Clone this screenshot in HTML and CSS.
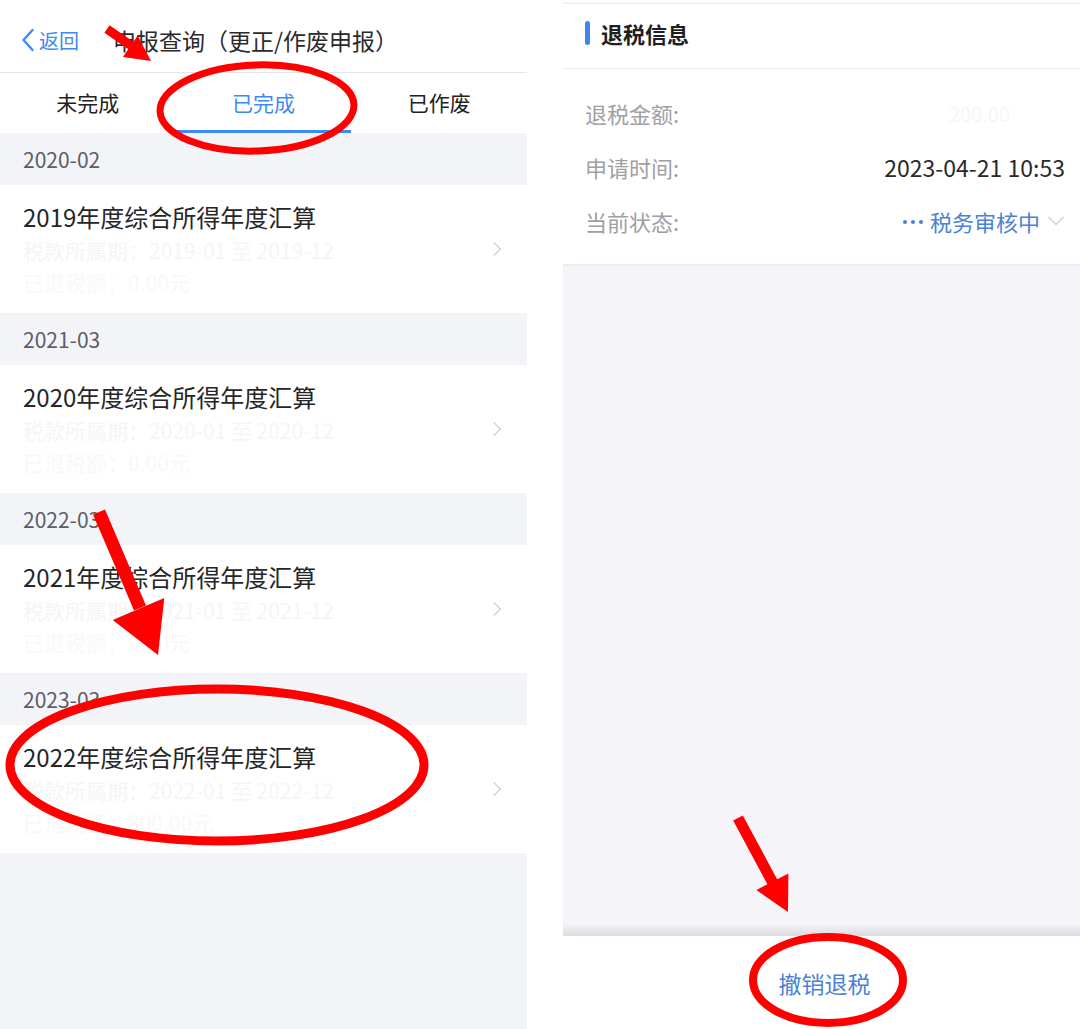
FILE: index.html
```html
<!DOCTYPE html>
<html lang="zh-CN">
<head>
<meta charset="utf-8">
<title>申报查询</title>
<link rel="stylesheet" href="styles.css">
</head>
<body>
<div class="page">
  <section class="left">
    <header class="nav">
      <div class="back">
        <svg class="back-icon" width="14" height="24" viewBox="0 0 14 24"><path d="M11.5 2 L2.5 12 L11.5 22" fill="none" stroke="#3d8af7" stroke-width="2.4" stroke-linecap="round" stroke-linejoin="round"/></svg>
        <span>返回</span>
      </div>
      <div class="nav-title">申报查询（更正/作废申报）</div>
    </header>
    <nav class="tabs">
      <div class="tab">未完成</div>
      <div class="tab active">已完成</div>
      <div class="tab">已作废</div>
    </nav>
    <div class="list">
      <div class="group-head">2020-02</div>
      <div class="item">
        <div class="item-text">
          <div class="item-title">2019年度综合所得年度汇算</div>
          <div class="item-sub">税款所属期：2019-01 至 2019-12</div>
          <div class="item-sub faint">已退税额：0.00元</div>
        </div>
        <span class="chev"></span>
      </div>
      <div class="group-head">2021-03</div>
      <div class="item">
        <div class="item-text">
          <div class="item-title">2020年度综合所得年度汇算</div>
          <div class="item-sub">税款所属期：2020-01 至 2020-12</div>
          <div class="item-sub faint">已退税额：0.00元</div>
        </div>
        <span class="chev"></span>
      </div>
      <div class="group-head">2022-03</div>
      <div class="item">
        <div class="item-text">
          <div class="item-title">2021年度综合所得年度汇算</div>
          <div class="item-sub">税款所属期：2021-01 至 2021-12</div>
          <div class="item-sub faint">已退税额：0.00元</div>
        </div>
        <span class="chev"></span>
      </div>
      <div class="group-head">2023-03</div>
      <div class="item">
        <div class="item-text">
          <div class="item-title">2022年度综合所得年度汇算</div>
          <div class="item-sub">税款所属期：2022-01 至 2022-12</div>
          <div class="item-sub faint">已退税额：300.00元</div>
        </div>
        <span class="chev"></span>
      </div>
      <div class="list-rest"></div>
    </div>
  </section>

  <section class="right">
    <div class="top-edge"></div>
    <div class="card">
      <div class="card-head"><span class="bar"></span><span>退税信息</span></div>
      <div class="rows">
        <div class="row"><span class="label">退税金额:</span><span class="value faint-value">200.00</span></div>
        <div class="row"><span class="label">申请时间:</span><span class="value">2023-04-21 10:53</span></div>
        <div class="row"><span class="label">当前状态:</span>
          <span class="status"><svg class="dots" width="22" height="6" viewBox="0 0 22 6"><circle cx="3" cy="3" r="2" fill="#4a82d6"/><circle cx="11" cy="3" r="2" fill="#4a82d6"/><circle cx="19" cy="3" r="2" fill="#4a82d6"/></svg>税务审核中<svg class="down" width="18" height="12" viewBox="0 0 18 12"><path d="M1.5 2 L9 9.5 L16.5 2" fill="none" stroke="#cfd0d4" stroke-width="1.4"/></svg></span>
        </div>
      </div>
    </div>
    <div class="fill"></div>
    <footer class="footer"><span class="cancel">撤销退税</span></footer>
  </section>
</div>

<svg class="marks" width="1080" height="1029" viewBox="0 0 1080 1029">
  <g fill="#ff0000" stroke="#ff0000">
    <line x1="107" y1="29" x2="133" y2="47" stroke-width="9"/>
    <polygon points="151,61 122.9,57 137.7,35.6" stroke="none"/>
    <line x1="99" y1="512" x2="140" y2="608" stroke-width="13"/>
    <polygon points="158,655 112.7,620 164.3,598" stroke="none"/>
    <line x1="738" y1="818" x2="774" y2="885" stroke-width="11"/>
    <polygon points="788,912 756.4,890 788.4,873.4" stroke="none"/>
  </g>
  <g fill="none" stroke="#ff0000">
    <ellipse cx="257" cy="108" rx="97" ry="43" stroke-width="7" transform="rotate(-2 257 108)"/>
    <ellipse cx="217" cy="765" rx="207" ry="76" stroke-width="9"/>
    <ellipse cx="828" cy="980" rx="75" ry="43" stroke-width="8"/>
  </g>
</svg>
</body>
</html>
```

FILE: styles.css
```css
* { box-sizing: border-box; }
html, body {
  margin: 0;
  padding: 0;
  width: 1080px;
  height: 1029px;
  overflow: hidden;
  background: #ffffff;
  font-family: "Noto Sans CJK SC", "Noto Sans", sans-serif;
}
.page {
  position: relative;
  display: flex;
  gap: 36px;
  width: 1080px;
  height: 1029px;
}

/* ---------- left phone ---------- */
.left {
  width: 527px;
  display: flex;
  flex-direction: column;
  background: #fff;
}
.nav {
  height: 73px;
  display: flex;
  align-items: center;
  border-bottom: 1px solid #e3e3e8;
  padding-top: 8px;
}
.back {
  display: flex;
  align-items: center;
  gap: 4px;
  padding-left: 21px;
  color: #3d8af7;
  font-size: 20px;
  width: 113px;
}
.back-icon { display: block; }
.nav-title {
  font-size: 23px;
  color: #2b2b2b;
}
.tabs {
  height: 60px;
  display: grid;
  grid-template-columns: 1fr 1fr 1fr;
}
.tab {
  display: flex;
  align-items: center;
  justify-content: center;
  font-size: 21px;
  color: #222;
  padding-bottom: 2px;
}
.tab.active {
  color: #3d8af7;
  border-bottom: 3px solid #3d8af7;
  padding-bottom: 0;
}
.list {
  flex: 1;
  display: flex;
  flex-direction: column;
  background: #f3f4f8;
}
.group-head {
  height: 52px;
  display: flex;
  align-items: center;
  padding-left: 23px;
  font-size: 21px;
  color: #5c5d66;
  background: #f3f4f8;
}
.item {
  height: 128px;
  background: #fff;
  display: flex;
  align-items: center;
  padding: 0 24px 0 23px;
}
.item-text {
  flex: 1;
  align-self: flex-start;
  padding-top: 15px;
}
.item-title {
  font-size: 24px;
  line-height: 34px;
  color: #262626;
}
.item-sub {
  font-size: 21px;
  line-height: 32px;
  color: #f5f5f5;
  white-space: nowrap;
}
.item-sub.faint { color: #f8f8f8; }
.chev {
  width: 10px;
  height: 10px;
  border-top: 1.6px solid #c5c6cb;
  border-right: 1.6px solid #c5c6cb;
  transform: rotate(45deg);
  margin-right: 4px;
}
.list-rest { flex: 1; background: #f3f4f8; }

/* ---------- right phone ---------- */
.right {
  flex: 1;
  display: flex;
  flex-direction: column;
  background: #f5f5f9;
}
.top-edge {
  height: 4px;
  background: #fff;
  box-shadow: inset 0 -2px 2px -1px #e6e6ea;
}
.card {
  background: #fff;
  border-bottom: 2px solid #ececf0;
}
.card-head {
  height: 65px;
  display: flex;
  align-items: center;
  gap: 11px;
  padding-left: 22px;
  padding-bottom: 6px;
  font-size: 22px;
  font-weight: 700;
  color: #1f1f1f;
  border-bottom: 1px solid #eeeef1;
}
.bar {
  width: 5px;
  height: 24px;
  border-radius: 3px;
  background: #3f86f0;
}
.rows {
  padding: 17px 15px 16px 22px;
}
.row {
  height: 54px;
  display: flex;
  align-items: center;
  justify-content: space-between;
}
.label {
  font-size: 22px;
  color: #a0a0a4;
}
.value {
  font-size: 23px;
  color: #2a2a2a;
}
.faint-value {
  color: #f6f6f6;
  margin-right: 55px;
  font-size: 20px;
}
.status {
  display: flex;
  align-items: center;
  font-size: 22px;
  color: #4a82d6;
}
.dots { display: block; margin-right: 6px; margin-top: 2px; }
.down { margin-left: 7px; display: block; }
.fill {
  flex: 1;
  background: linear-gradient(to bottom, #f5f5f9 0, #f5f5f9 calc(100% - 12px), #dcdce0 100%);
}
.footer {
  height: 93px;
  background: #fff;
  display: flex;
  align-items: center;
  justify-content: center;
  padding-left: 6px;
}
.cancel {
  font-size: 23px;
  color: #4a82d6;
}

/* ---------- annotations ---------- */
.marks {
  position: absolute;
  left: 0;
  top: 0;
  pointer-events: none;
}
```
